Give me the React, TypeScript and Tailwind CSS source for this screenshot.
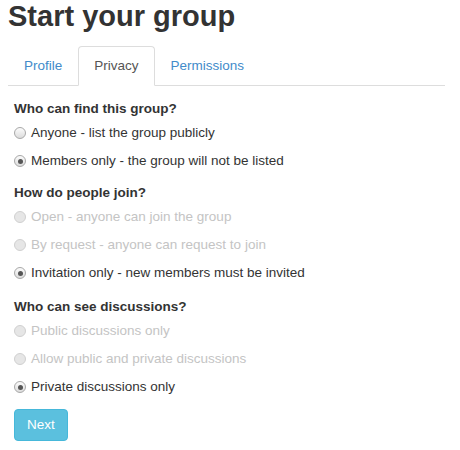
import { useState } from 'react'

interface Option {
  label: string
  disabled?: boolean
}

interface Section {
  title: string
  options: Option[]
  selected: number
  gap: string
}

const SECTIONS: Section[] = [
  {
    title: 'Who can find this group?',
    options: [
      { label: 'Anyone - list the group publicly' },
      { label: 'Members only - the group will not be listed' },
    ],
    selected: 1,
    gap: 'mt-[13px]',
  },
  {
    title: 'How do people join?',
    options: [
      { label: 'Open - anyone can join the group', disabled: true },
      { label: 'By request - anyone can request to join', disabled: true },
      { label: 'Invitation only - new members must be invited' },
    ],
    selected: 2,
    gap: 'mt-[8px]',
  },
  {
    title: 'Who can see discussions?',
    options: [
      { label: 'Public discussions only', disabled: true },
      { label: 'Allow public and private discussions', disabled: true },
      { label: 'Private discussions only' },
    ],
    selected: 2,
    gap: 'mt-[10px]',
  },
]

const TABS = ['Profile', 'Privacy', 'Permissions']

function Radio({ checked, disabled }: { checked: boolean; disabled?: boolean }) {
  return (
    <span
      className={
        disabled
          ? 'flex h-[12px] w-[12px] items-center justify-center rounded-full border border-[#d0d0d0] bg-[#e6e6e6]'
          : 'flex h-[12px] w-[12px] items-center justify-center rounded-full border border-[#a8a8a8] bg-gradient-to-b from-[#fcfcfc] to-[#dcdcdc]'
      }
    >
      {checked && <span className="h-[5px] w-[5px] rounded-full bg-[#555]" />}
    </span>
  )
}

export default function App() {
  const [active] = useState(1)

  return (
    <div
      className="min-h-[450px] w-[460px] bg-white px-2 text-[13.5px] text-[#333]"
      style={{ fontFamily: '"Liberation Sans", Arial, sans-serif' }}
    >
      <h1 className="m-0 text-[29px] font-bold leading-[33px] text-[#333]">
        Start your group
      </h1>

      <div className="mt-[13px] mr-[7px] flex border-b border-[#ddd]">
        {TABS.map((tab, i) => (
          <div
            key={tab}
            className={
              i === active
                ? '-mb-px rounded-t border border-[#ddd] border-b-white bg-white px-[15px] py-[9px] leading-5 text-[#555]'
                : '-mb-px rounded-t border border-transparent px-[15px] py-[9px] leading-5 text-[#428bca]'
            }
          >
            {tab}
          </div>
        ))}
      </div>

      <form className="px-[6px]">
        {SECTIONS.map(section => (
          <div key={section.title} className={section.gap}>
            <div className="font-bold leading-5 text-[#333]">{section.title}</div>
            {section.options.map((opt, i) => (
              <label
                key={opt.label}
                className={
                  opt.disabled
                    ? 'flex h-[28px] items-center gap-[5px] text-[#c4c4c4]'
                    : 'flex h-[28px] items-center gap-[5px] text-[#333]'
                }
              >
                <Radio checked={i === section.selected} disabled={opt.disabled} />
                <span className="leading-5">{opt.label}</span>
              </label>
            ))}
          </div>
        ))}

        <button
          type="button"
          className="mt-[8px] h-[32px] rounded-[4px] border border-[#46b8da] bg-[#5bc0de] px-[12px] leading-5 text-white"
        >
          Next
        </button>
      </form>
    </div>
  )
}
